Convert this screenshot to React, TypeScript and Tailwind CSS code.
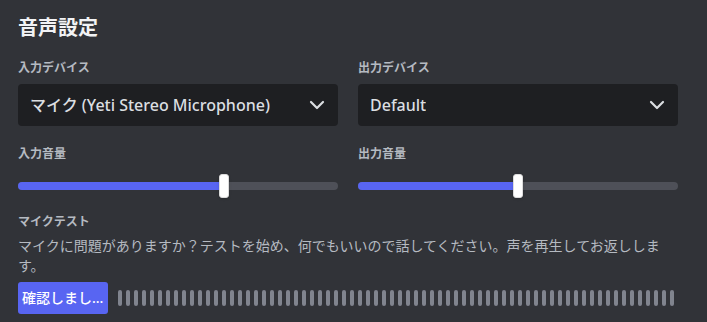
import { ChevronDown } from 'lucide-react';

const FONT = { fontFamily: '"Noto Sans", "Noto Sans CJK JP", sans-serif' };

function Select({ value }: { value: string }) {
  return (
    <div className="h-[42px] bg-[#1e1f22] rounded flex items-center justify-between pl-3 pr-[9px]">
      <span className="text-base font-medium text-[#dbdee1] truncate">{value}</span>
      <ChevronDown size={24} strokeWidth={2.2} className="text-[#dbdee1] shrink-0" />
    </div>
  );
}

function Slider({ percent }: { percent: number }) {
  return (
    <div className="relative h-6 mt-3">
      <div className="absolute left-0 right-0 top-2 h-2 rounded bg-[#4e5058]" />
      <div className="absolute left-0 top-2 h-2 rounded bg-[#5865f2]" style={{ width: `${percent}%` }} />
      <div
        className="absolute top-0 h-6 w-2.5 -ml-[5px] rounded-[3px] bg-white border border-[#dcdcdc] shadow"
        style={{ left: `${percent}%` }}
      />
    </div>
  );
}

const Label = ({ children }: { children: React.ReactNode }) => (
  <p className="text-xs leading-4 font-bold text-[#b5bac1]">{children}</p>
);

export default function App() {
  return (
    <div className="w-[707px] h-[322px] bg-[#313338] pt-4 px-[18px] overflow-hidden" style={FONT}>
      <h2 className="text-xl leading-6 font-bold text-[#f2f3f5]">音声設定</h2>

      <div className="w-[660px] grid grid-cols-2 gap-x-5">
        {/* Devices */}
        <div className="mt-5">
          <Label>入力デバイス</Label>
          <div className="mt-2">
            <Select value="マイク (Yeti Stereo Microphone)" />
          </div>
        </div>
        <div className="mt-5">
          <Label>出力デバイス</Label>
          <div className="mt-2">
            <Select value="Default" />
          </div>
        </div>

        {/* Volume */}
        <div className="mt-5">
          <Label>入力音量</Label>
          <Slider percent={64.4} />
        </div>
        <div className="mt-5">
          <Label>出力音量</Label>
          <Slider percent={50} />
        </div>
      </div>

      {/* Mic test */}
      <div className="w-[660px] mt-4">
        <Label>マイクテスト</Label>
        <p className="mt-1.5 text-sm leading-5 text-[#b5bac1]">
          マイクに問題がありますか？テストを始め、何でもいいので話してください。声を再生してお返しします。
        </p>
        <div className="mt-1.5 flex items-center gap-2.5">
          <button className="w-[90px] h-8 shrink-0 rounded-[3px] bg-[#5865f2] text-white text-sm font-medium px-1 text-left whitespace-nowrap overflow-hidden">
            確認しまし...
          </button>
          <div className="flex gap-1">
            {Array.from({ length: 70 }).map((_, i) => (
              <div key={i} className="w-1 h-4 rounded-sm bg-[#80848e]" />
            ))}
          </div>
        </div>
      </div>
    </div>
  );
}
